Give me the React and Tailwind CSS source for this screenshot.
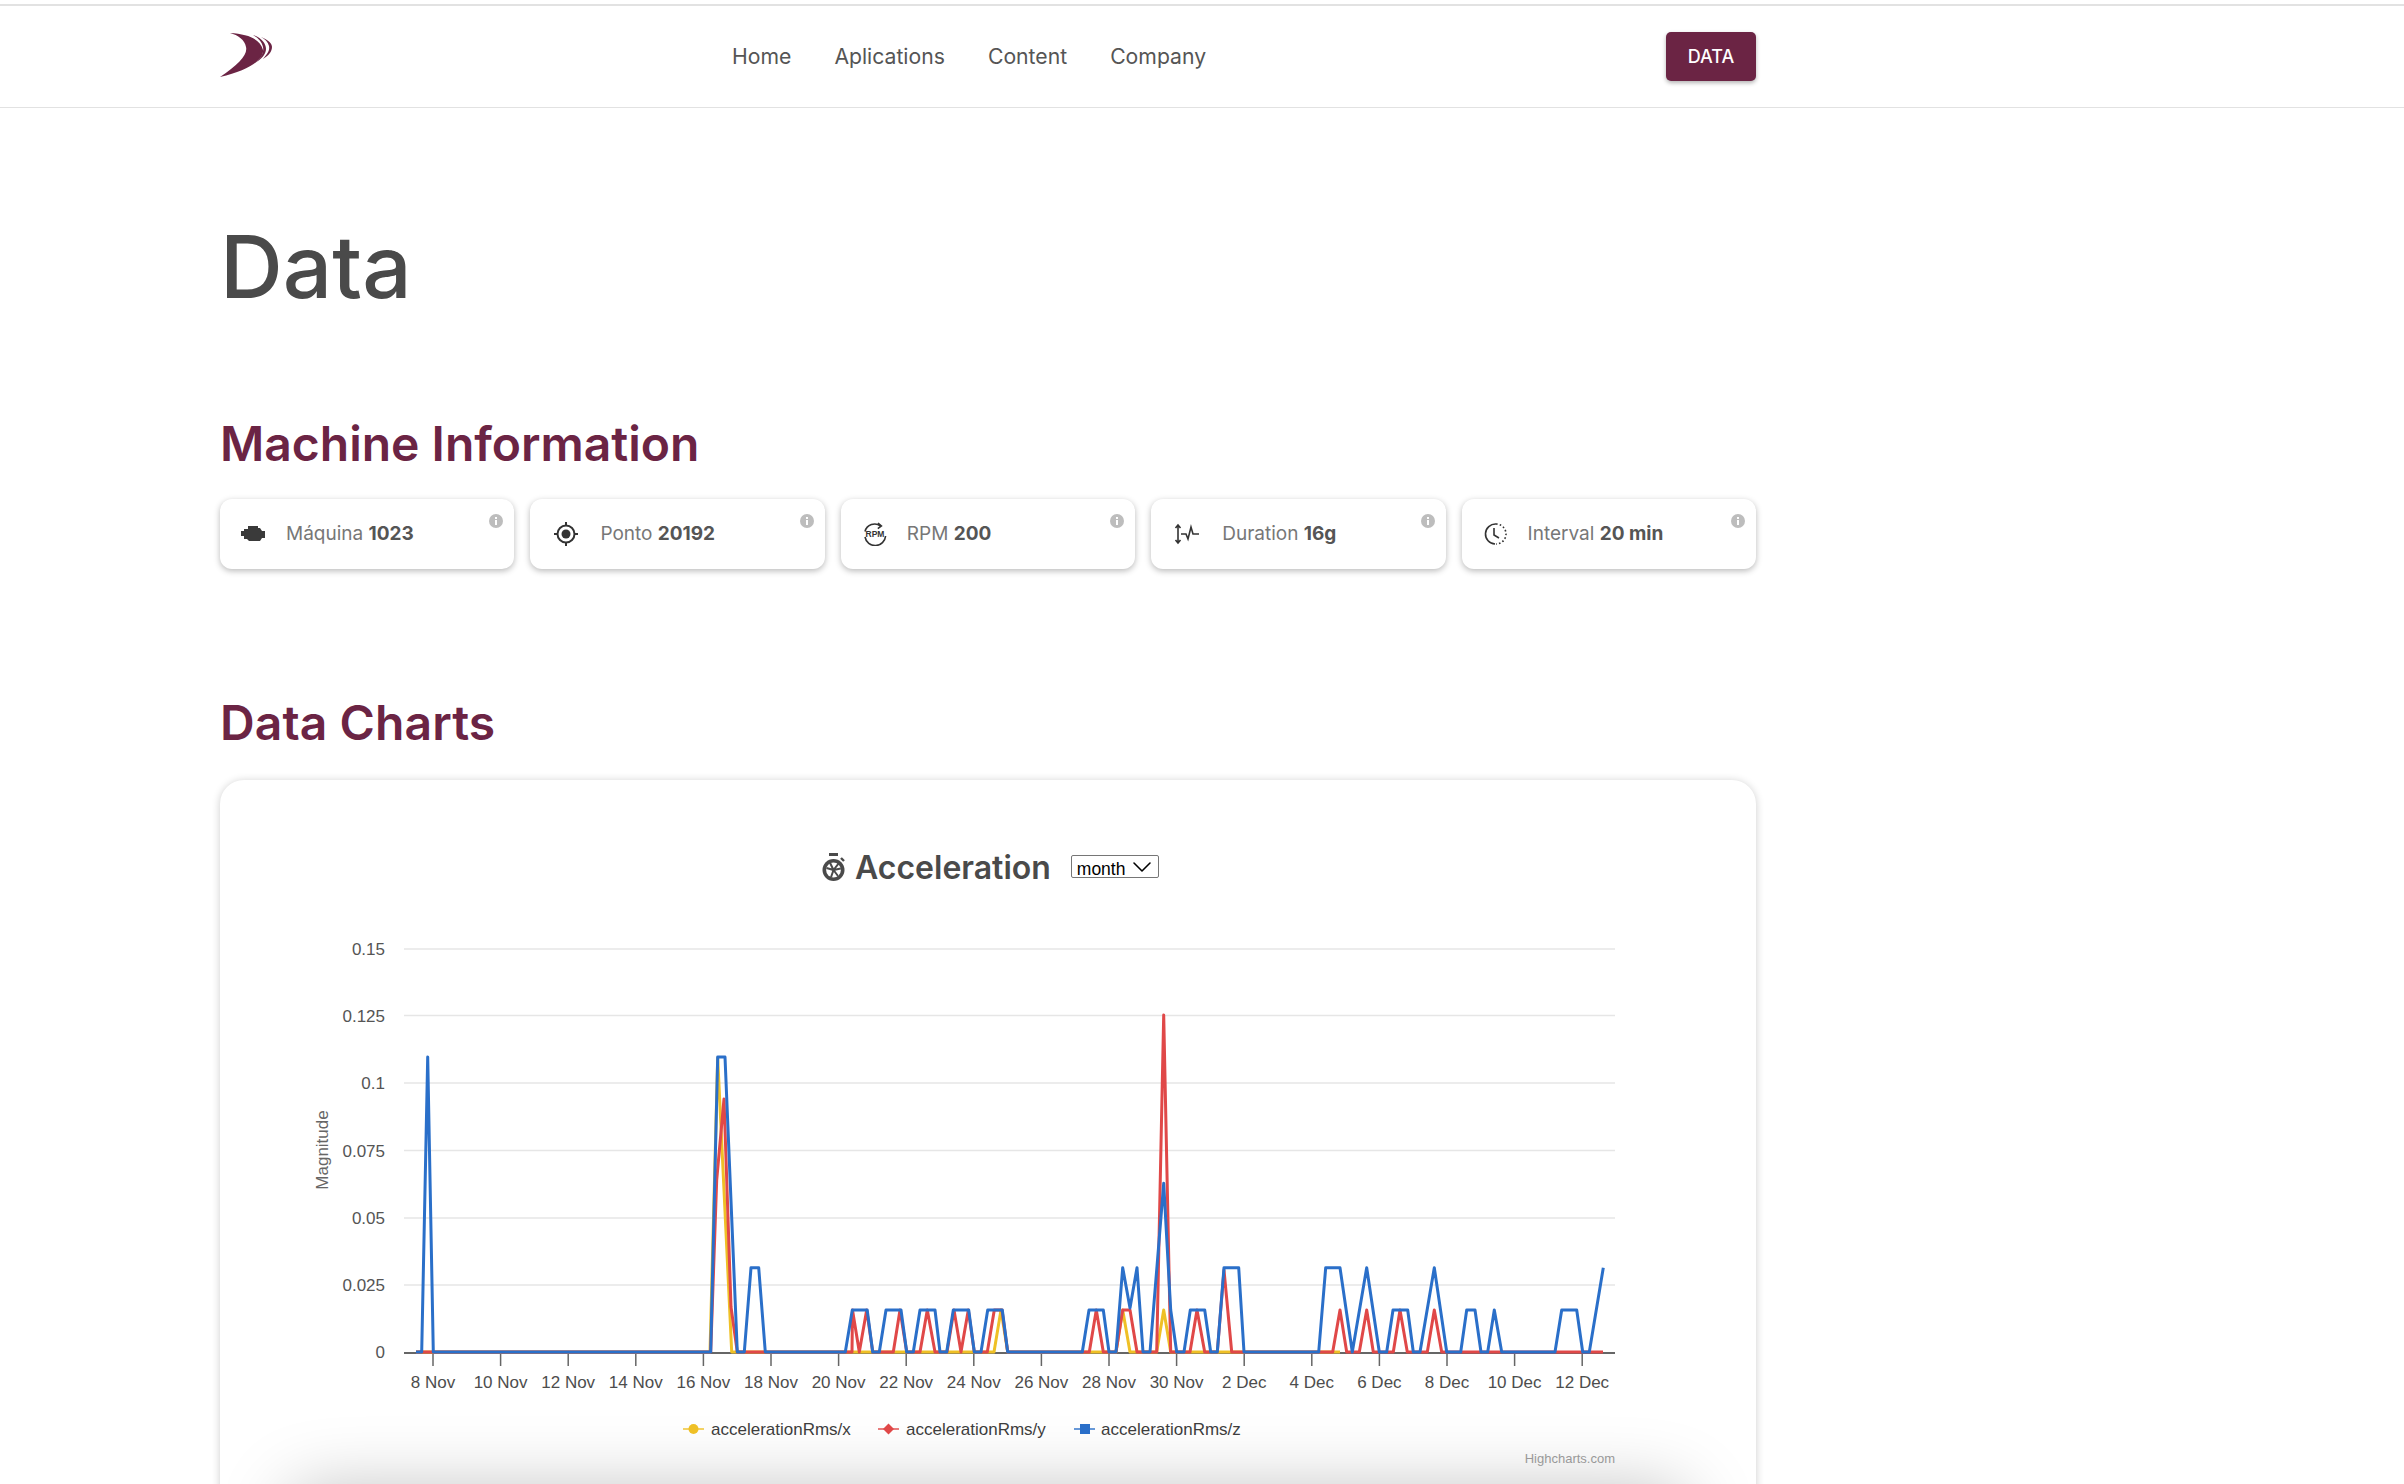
import { ChevronDown } from 'lucide-react';

const BLUE = '#2a6fc9';
const RED = '#e04848';
const YELLOW = '#efc026';

// chart points are page pixels read off the reference, the viewBox below keeps them as they are
const yellowLine = '416,1352 710,1352 717.7,1058 731.7,1352 994,1352 1001,1310 1007.7,1352 1116,1352 1122.7,1310 1130,1352 1156.7,1352 1163.7,1310 1170.7,1352 1340,1352';
const redLine = '416,1352 710.7,1352 716.7,1180 724,1099 731,1307 737.3,1352 852,1352 852.5,1310 859.3,1352 866.7,1310 872.7,1352 893.3,1352 900,1310 906.7,1352 920,1352 927.3,1310 935,1352 947,1352 954,1310 961,1352 968.3,1310 974.3,1352 987.3,1352 994.3,1310 1002,1310 1007.7,1352 1089.3,1352 1096.3,1310 1103.3,1352 1116,1352 1122.7,1310 1130,1310 1137,1352 1156.7,1352 1163.7,1015 1170.7,1352 1190,1352 1197,1310 1204.7,1352 1217.3,1352 1224,1270 1231.7,1352 1332.7,1352 1340,1310 1346.7,1352 1359.3,1352 1366.7,1310 1373.3,1352 1393.3,1352 1400,1310 1407.3,1352 1427.3,1352 1434.3,1310 1441.7,1352 1603,1352';
const blueLine = '416,1352 421.7,1352 427.7,1057 433.3,1352 710.7,1352 717.7,1057 725,1057 737.3,1352 744.3,1352 751,1267.7 758.7,1267.7 765.3,1352 845.3,1352 852.3,1310 867.2,1310 872.7,1352 879.3,1352 886,1310 901,1310 906.7,1352 913.3,1352 920,1310 935,1310 940,1352 946.7,1352 953.3,1310 968.7,1310 974.3,1352 981,1352 987.7,1310 1002.3,1310 1007.7,1352 1082.3,1352 1089,1310 1103.3,1310 1109,1352 1116,1352 1122.7,1267.7 1130,1308 1137,1267.7 1143,1352 1150,1352 1156.7,1270 1163.7,1183.3 1170.7,1310 1176.7,1352 1184,1352 1190.3,1310 1204.7,1310 1210.7,1352 1217.3,1352 1224,1267.7 1238.7,1267.7 1244,1352 1318.7,1352 1325.7,1267.7 1340,1267.7 1352.3,1352 1366.7,1267.7 1379.3,1352 1386.7,1352 1393,1310 1407.7,1310 1413.3,1352 1420,1352 1434.3,1267.7 1446.7,1352 1460.7,1352 1466.7,1310 1475,1310 1481,1352 1487.7,1352 1494.3,1310 1501.7,1352 1555,1352 1561.7,1310 1576.7,1310 1582.7,1352 1589.3,1352 1603.3,1267.7';

const gridLines = [
    { y: 949, label: '0.15' },
    { y: 1015.5, label: '0.125' },
    { y: 1083, label: '0.1' },
    { y: 1150.5, label: '0.075' },
    { y: 1218, label: '0.05' },
    { y: 1285, label: '0.025' },
];

const ticks = ['8 Nov', '10 Nov', '12 Nov', '14 Nov', '16 Nov', '18 Nov', '20 Nov', '22 Nov', '24 Nov', '26 Nov', '28 Nov', '30 Nov', '2 Dec', '4 Dec', '6 Dec', '8 Dec', '10 Dec', '12 Dec'];

const EngineIcon = () => (
    <svg width="24" height="18" viewBox="0 0 24 18" fill="#3a3a3a">
        <path d="M7 1h10v2h2l2 3h3v7h-3l-2 3H8l-2-2H3v-3H0V6h3V4h4z" />
    </svg>
);

const TargetIcon = () => (
    <svg width="26" height="26" viewBox="0 0 26 26" fill="none" stroke="#333" strokeWidth="2">
        <circle cx="13" cy="13" r="8.5" />
        <circle cx="13" cy="13" r="4.5" fill="#333" stroke="none" />
        <path d="M13 1v4M13 21v4M1 13h4M21 13h4" />
    </svg>
);

const RpmIcon = () => (
    <svg width="24" height="24" viewBox="0 0 24 24" fill="none" stroke="#333" strokeWidth="1.6">
        <path d="M2 9.5a10 10 0 0 1 15.6-5.5M22.6 14a10.4 10.4 0 0 1-20.6 1" />
        <path d="M15 1l3.4 3-3.6 2.6" />
        <text x="12" y="15" textAnchor="middle" fontSize="8.5" fontWeight="700" fill="#333" stroke="none" className="[font-family:'Liberation_Sans',sans-serif]">RPM</text>
    </svg>
);

const DurationIcon = () => (
    <svg width="26" height="22" viewBox="0 0 26 22" fill="none" stroke="#333" strokeWidth="1.6">
        <path d="M4 3v16M1.5 5L4 2l2.5 3M1.5 17L4 20l2.5-3" />
        <path d="M7 11h5l2 5 3-12 2 7h6" />
    </svg>
);

const ClockIcon = () => (
    <svg width="24" height="24" viewBox="0 0 24 24" fill="none" stroke="#333" strokeWidth="1.6">
        <path d="M13 2a10 10 0 1 0-1 20" />
        <path d="M13 2a10 10 0 0 1 0 20" strokeDasharray="1.6 2.2" />
        <path d="M11 6v7l5 3" />
    </svg>
);

const StopwatchIcon = () => (
    <svg width="26" height="30" viewBox="0 0 26 30">
        <rect x="8" y="0" width="9" height="3" fill="#4a4a4a" />
        <path d="M20 5l3 3" stroke="#4a4a4a" strokeWidth="2.4" />
        <circle cx="12.5" cy="17" r="11" fill="#4a4a4a" />
        <circle cx="12.5" cy="17" r="7.4" fill="#fff" />
        <path d="M12.5 17L9 9.8M12.5 17l7.3-1.5M12.5 17l4.5 6M12.5 17l-7-2M12.5 17l-2.5 7.3M12.5 17l5-6.4" stroke="#4a4a4a" strokeWidth="2" />
    </svg>
);

const Logo = () => (
    <svg width="70" height="60" viewBox="0 0 70 60" fill="#6b2444" className="-mt-[3px] -ml-[10px]">
        <path d="M20 8C38 9 50 14 53 25C54 34 40 45 10 52C28 40 38 30 36 22C35 15 28 10 20 8Z" />
        <path d="M43 10C52 13 56 19 56 24C56 29 52 33 47 37C52 31 54 27 53 22C52 17 48 13 43 10Z" />
        <path d="M51 12C59 15 62 19 62 22C62 27 58 31 53 34C57 29 60 26 59 21C58 17 55 14 51 12Z" />
    </svg>
);

const InfoDot = () => (
    <svg width="14" height="14" viewBox="0 0 14 14" className="absolute top-[15px] right-[11px]">
        <circle cx="7" cy="7" r="7" fill="#bdbdbd" />
        <rect x="6" y="6" width="2" height="5" fill="#fff" />
        <rect x="6" y="3" width="2" height="2" fill="#fff" />
    </svg>
);

const infoCards = [
    { label: 'Máquina', value: '1023', icon: <EngineIcon />, box: 'w-[24px] ml-[21px] mr-[21px]' },
    { label: 'Ponto', value: '20192', icon: <TargetIcon />, box: 'w-[26px] ml-[23px] mr-[21px]' },
    { label: 'RPM', value: '200', icon: <RpmIcon />, box: 'w-[24px] ml-[22px] mr-[20px]' },
    { label: 'Duration', value: '16g', icon: <DurationIcon />, box: 'w-[26px] ml-[23px] mr-[22px]' },
    { label: 'Interval', value: '20 min', icon: <ClockIcon />, box: 'w-[24px] ml-[21px] mr-[21px]' },
];

const Chart = () => (
    <svg width="1536" height="584" viewBox="220 900 1536 584" className="block [font-family:'Liberation_Sans',sans-serif]">
        {gridLines.map((line) => (
            <g key={line.label}>
                <line x1="404" x2="1615" y1={line.y} y2={line.y} stroke="#e6e6e6" strokeWidth="1.5" />
                <text x="385" y={line.y + 6} textAnchor="end" fontSize="17" fill="#555">{line.label}</text>
            </g>
        ))}
        <text x="385" y="1358" textAnchor="end" fontSize="17" fill="#555">0</text>
        <text transform="translate(328 1150) rotate(-90)" textAnchor="middle" fontSize="17" fill="#666">Magnitude</text>

        <line x1="404" x2="1615" y1="1353" y2="1353" stroke="#666" strokeWidth="2" />
        {ticks.map((tick, i) => (
            <g key={tick}>
                <line x1={433 + 67.6 * i} x2={433 + 67.6 * i} y1="1353" y2="1366" stroke="#666" strokeWidth="1.5" />
                <text x={433 + 67.6 * i} y="1388" textAnchor="middle" fontSize="17" fill="#4d4d4d">{tick}</text>
            </g>
        ))}

        <polyline points={yellowLine} fill="none" stroke={YELLOW} strokeWidth="3" strokeLinejoin="round" />
        <polyline points={redLine} fill="none" stroke={RED} strokeWidth="3" strokeLinejoin="round" />
        <polyline points={blueLine} fill="none" stroke={BLUE} strokeWidth="3" strokeLinejoin="round" />

        <line x1="683" x2="704" y1="1429" y2="1429" stroke={YELLOW} strokeWidth="2" opacity="0.7" />
        <circle cx="693.5" cy="1429" r="5" fill={YELLOW} />
        <text x="711" y="1434.5" fontSize="17" fill="#3d3d3d">accelerationRms/x</text>

        <line x1="878" x2="899" y1="1429" y2="1429" stroke={RED} strokeWidth="2" opacity="0.7" />
        <path d="M888.5 1423.5l5.5 5.5-5.5 5.5-5.5-5.5z" fill={RED} />
        <text x="906" y="1434.5" fontSize="17" fill="#3d3d3d">accelerationRms/y</text>

        <line x1="1074" x2="1095" y1="1429" y2="1429" stroke={BLUE} strokeWidth="2" opacity="0.7" />
        <rect x="1080" y="1424" width="10" height="10" fill={BLUE} />
        <text x="1101" y="1434.5" fontSize="17" fill="#3d3d3d">accelerationRms/z</text>

        <text x="1615" y="1463" textAnchor="end" fontSize="13" fill="#999">Highcharts.com</text>
    </svg>
);

export default function App() {
    return (
        <div className="h-[1484px] overflow-hidden bg-white pt-[4px] text-[#555] [font-family:Inter,sans-serif]">
            <nav className="h-[104px] border-t-2 border-b border-[#e2e2e2]">
                <div className="ml-[220px] flex h-full w-[1536px] items-center justify-between">
                    <div className="flex items-center">
                        <Logo />
                        <ul className="ml-[452px] flex gap-[43px] text-[21.2px]">
                            <li>Home</li>
                            <li>Aplications</li>
                            <li>Content</li>
                            <li>Company</li>
                        </ul>
                    </div>
                    <button className="h-[49px] w-[90px] rounded-[5px] bg-[#6b2444] text-[18px] font-medium text-white shadow-[0_2px_4px_rgba(0,0,0,.3)]">
                        DATA
                    </button>
                </div>
            </nav>

            <main className="ml-[220px] w-[1536px]">
                <h1 className="mt-[109px] text-[87px] leading-[100px] font-medium text-[#4a4a4a]">Data</h1>

                <h2 className="mt-[97px] text-[48px] leading-[60px] font-semibold text-[#6b2444]">Machine Information</h2>
                <div className="mt-[25px] grid grid-cols-5 gap-[16px]">
                    {infoCards.map((card) => (
                        <div key={card.label} className="relative flex h-[70px] items-center rounded-[12px] bg-white text-[19px] shadow-[0_2px_6px_rgba(0,0,0,.28)]">
                            <div className={`flex justify-center ${card.box}`}>{card.icon}</div>
                            <span className="pt-[1px] text-[#777]">{card.label}&nbsp;</span>
                            <span className="pt-[1px] font-bold text-[#555]">{card.value}</span>
                            <InfoDot />
                        </div>
                    ))}
                </div>

                <h2 className="mt-[124px] text-[48px] leading-[60px] font-semibold tracking-[0.1px] text-[#6b2444]">Data Charts</h2>
                <section className="mt-[27px] rounded-[24px] bg-white shadow-[0_1px_8px_rgba(0,0,0,.2)]">
                    <div className="flex h-[120px] items-center pt-[55px] pl-[601px]">
                        <StopwatchIcon />
                        <span className="ml-[8px] text-[32px] font-semibold text-[#4a4a4a]">Acceleration</span>
                        <div className="relative ml-[20px]">
                            <select className="h-[23px] w-[88px] appearance-none rounded-[2px] border border-[#767676] pl-[5px] text-[17.5px] text-black [font-family:'Liberation_Sans',sans-serif]">
                                <option>month</option>
                            </select>
                            <ChevronDown size={32} strokeWidth={1.2} className="absolute -top-[4px] right-[1px] text-black" />
                        </div>
                    </div>
                    <Chart />
                    <div className="mx-[70px] mt-[6px] h-[200px] rounded-[24px] bg-white shadow-[0_0_70px_rgba(0,0,0,.25)]" />
                </section>
            </main>
        </div>
    );
}
